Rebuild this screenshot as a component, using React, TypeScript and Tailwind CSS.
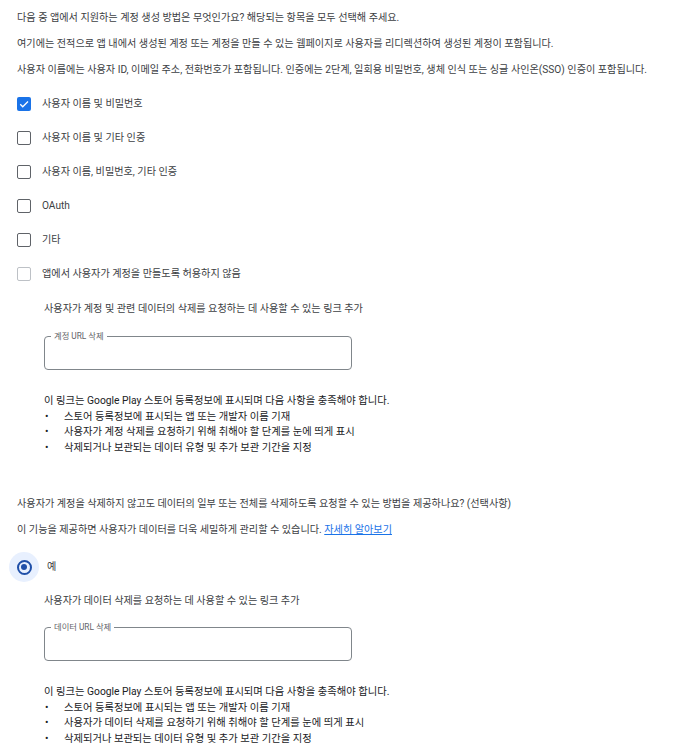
import React from "react";

const font = { fontFamily: 'Roboto, "Noto Sans CJK KR", sans-serif' };

function Check({ checked, disabled }: { checked?: boolean; disabled?: boolean }) {
  if (checked) {
    return (
      <span className="flex h-[14px] w-[14px] items-center justify-center rounded-[2px] bg-[#1a73e8]">
        <svg width="12" height="12" viewBox="0 0 24 24" fill="none">
          <path d="M4.5 12.5l5 5L20 7" stroke="white" strokeWidth="2.6" />
        </svg>
      </span>
    );
  }
  return (
    <span
      className={
        disabled
          ? "block h-[14px] w-[14px] rounded-[2px] border border-[#bdc1c6]"
          : "block h-[14px] w-[14px] rounded-[2px] border-[1.5px] border-[#5f6368]"
      }
    />
  );
}

function Row({ label, checked, disabled }: { label: string; checked?: boolean; disabled?: boolean }) {
  return (
    <div className="flex h-[34px] items-center">
      <Check checked={checked} disabled={disabled} />
      <span className="ml-[11px]">{label}</span>
    </div>
  );
}

function OutlinedInput({ label }: { label: string }) {
  return (
    <div className="relative h-[34px] w-[308px] rounded-[4px] border border-[#80868b]">
      <span className="absolute left-[6px] top-[-6px] bg-white px-[3px] text-[8.3px] leading-[10px] text-[#5f6368]">
        {label}
      </span>
    </div>
  );
}

function Requirements({ middle }: { middle: string }) {
  return (
    <div className="text-[10.3px] leading-[15.5px] text-[#202124]">
      <div>이 링크는 Google Play 스토어 등록정보에 표시되며 다음 사항을 충족해야 합니다.</div>
      {["스토어 등록정보에 표시되는 앱 또는 개발자 이름 기재", middle, "삭제되거나 보관되는 데이터 유형 및 추가 보관 기간을 지정"].map((t) => (
        <div key={t} className="flex">
          <span className="w-[20px] pl-[1px]">•</span>
          <span>{t}</span>
        </div>
      ))}
    </div>
  );
}

export default function App() {
  return (
    <div className="min-h-[752px] w-[673px] bg-white text-[10.15px] text-[#3c4043]" style={font}>
      <div className="px-[17px] pt-[5px]">
        <p className="leading-[26px]">다음 중 앱에서 지원하는 계정 생성 방법은 무엇인가요? 해당되는 항목을 모두 선택해 주세요.</p>
        <p className="leading-[26px]">여기에는 전적으로 앱 내에서 생성된 계정 또는 계정을 만들 수 있는 웹페이지로 사용자를 리디렉션하여 생성된 계정이 포함됩니다.</p>
        <p className="leading-[26px]">사용자 이름에는 사용자 ID, 이메일 주소, 전화번호가 포함됩니다. 인증에는 2단계, 일회용 비밀번호, 생체 인식 또는 싱글 사인온(SSO) 인증이 포함됩니다.</p>
        <div className="mt-[4px]">
          <Row label="사용자 이름 및 비밀번호" checked />
          <Row label="사용자 이름 및 기타 인증" />
          <Row label="사용자 이름, 비밀번호, 기타 인증" />
          <Row label="OAuth" />
          <Row label="기타" />
          <Row label="앱에서 사용자가 계정을 만들도록 허용하지 않음" disabled />
        </div>
        <div className="pl-[27px]">
          <div className="flex h-[36px] items-center">사용자가 계정 및 관련 데이터의 삭제를 요청하는 데 사용할 수 있는 링크 추가</div>
          <div className="mt-[9px]">
            <OutlinedInput label="계정 URL 삭제" />
          </div>
          <div className="mt-[23px]">
            <Requirements middle="사용자가 계정 삭제를 요청하기 위해 취해야 할 단계를 눈에 띄게 표시" />
          </div>
        </div>
        <p className="mt-[36px] leading-[26px]">사용자가 계정을 삭제하지 않고도 데이터의 일부 또는 전체를 삭제하도록 요청할 수 있는 방법을 제공하나요? (선택사항)</p>
        <p className="leading-[26px]">
          이 기능을 제공하면 사용자가 데이터를 더욱 세밀하게 관리할 수 있습니다.{" "}
          <a className="text-[#1a73e8] underline">자세히 알아보기</a>
        </p>
        <div className="mt-[7px] flex h-[34px] items-center">
          <span className="ml-[-8px] flex h-[30px] w-[30px] items-center justify-center rounded-full bg-[#e8f0fe]">
            <span className="flex h-[15px] w-[15px] items-center justify-center rounded-full border-2 border-[#1f4fa8]">
              <span className="h-[6px] w-[6px] rounded-full bg-[#1f4fa8]" />
            </span>
          </span>
          <span className="ml-[8px]">예</span>
        </div>
        <div className="pl-[27px]">
          <div className="mt-[6px] flex h-[22px] items-center">사용자가 데이터 삭제를 요청하는 데 사용할 수 있는 링크 추가</div>
          <div className="mt-[15px]">
            <OutlinedInput label="데이터 URL 삭제" />
          </div>
          <div className="mt-[23px]">
            <Requirements middle="사용자가 데이터 삭제를 요청하기 위해 취해야 할 단계를 눈에 띄게 표시" />
          </div>
        </div>
      </div>
    </div>
  );
}
